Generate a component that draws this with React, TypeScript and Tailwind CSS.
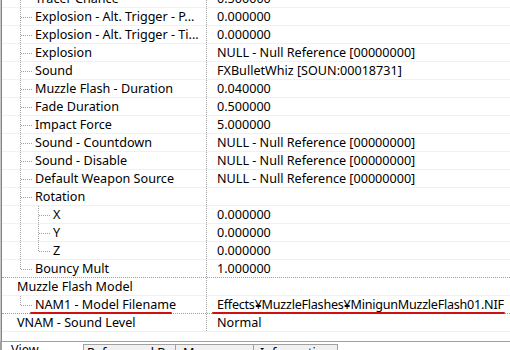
const rows = [
  { label: "Tracer Chance", value: "0.500000", level: 1 },
  { label: "Explosion - Alt. Trigger - P...", value: "0.000000", level: 1 },
  { label: "Explosion - Alt. Trigger - Ti...", value: "0.000000", level: 1 },
  { label: "Explosion", value: "NULL - Null Reference [00000000]", level: 1 },
  { label: "Sound", value: "FXBulletWhiz [SOUN:00018731]", level: 1 },
  { label: "Muzzle Flash - Duration", value: "0.040000", level: 1 },
  { label: "Fade Duration", value: "0.500000", level: 1 },
  { label: "Impact Force", value: "5.000000", level: 1 },
  { label: "Sound - Countdown", value: "NULL - Null Reference [00000000]", level: 1 },
  { label: "Sound - Disable", value: "NULL - Null Reference [00000000]", level: 1 },
  { label: "Default Weapon Source", value: "NULL - Null Reference [00000000]", level: 1 },
  { label: "Rotation", value: "", level: 1 },
  { label: "X", value: "0.000000", level: 2 },
  { label: "Y", value: "0.000000", level: 2 },
  { label: "Z", value: "0.000000", level: 2, last: true },
  { label: "Bouncy Mult", value: "1.000000", level: 1, last: true, dotted: true },
  { label: "Muzzle Flash Model", value: "", level: 0 },
  { label: "NAM1 - Model Filename", value: "Effects¥MuzzleFlashes¥MinigunMuzzleFlash01.NIF", level: 1, last: true, dotted: true, marked: true },
  { label: "VNAM - Sound Level", value: "Normal", level: 0 },
];

type Row = (typeof rows)[number] & { last?: boolean; dotted?: boolean; marked?: boolean };

const TreeLines = ({ row }: { row: Row }) => {
  if (row.level === 0) return null;
  if (row.level === 1) {
    return (
      <>
        <div className={`absolute left-[18px] top-0 border-l border-dotted border-[#a0a0a0] ${row.last ? "h-[9px]" : "h-full"}`} />
        <div className="absolute left-[19px] top-[9px] w-[11px] border-t border-dotted border-[#a0a0a0]" />
      </>
    );
  }
  return (
    <>
      <div className="absolute left-[18px] top-0 h-full border-l border-dotted border-[#a0a0a0]" />
      <div className={`absolute left-[36px] top-0 border-l border-dotted border-[#a0a0a0] ${row.last ? "h-[9px]" : "h-full"}`} />
      <div className="absolute left-[37px] top-[9px] w-[11px] border-t border-dotted border-[#a0a0a0]" />
    </>
  );
};

const App = () => {
  return (
    <div className="w-[510px] h-[350px] overflow-hidden bg-white flex flex-col text-[12.6px] text-black font-['Noto_Sans','Noto_Sans_CJK_JP',sans-serif]">
      <div className="flex h-[341px] shrink-0 overflow-hidden">
        <div className="w-[1px] bg-[#c8c8c8]" />
        <div className="w-[1px] bg-[#828282]" />
        <div className="flex-1 flex flex-col mt-[-10px]">
          {rows.map((r: Row, i) => (
            <div
              key={i}
              className={`relative flex h-[18px] shrink-0 leading-[18px] ${r.dotted ? "border-b border-dotted border-[#a0a0a0]" : "border-b border-[#f0f0f0]"}`}
            >
              <div className="relative w-[205px] shrink-0 border-r border-dotted border-[#a0a0a0] whitespace-nowrap overflow-hidden">
                <TreeLines row={r} />
                <span className={r.level === 0 ? "ml-[15px]" : r.level === 1 ? "ml-[33px]" : "ml-[51px]"}>{r.label}</span>
              </div>
              <div className={`pl-[10px] whitespace-nowrap ${r.marked ? "tracking-[-0.25px]" : ""}`}>{r.value}</div>
              {r.marked && (
                <>
                  <div className="absolute left-[28px] top-[16px] w-[142px] h-[2px] bg-[#d01010] rounded-full" />
                  <div className="absolute left-[210px] top-[16px] w-[293px] h-[2px] bg-[#d01010] rounded-full" />
                </>
              )}
            </div>
          ))}
        </div>
      </div>
      <div className="flex h-[9px] border-t border-[#a0a0a0] bg-white leading-[15px] whitespace-nowrap">
        <div className="w-[83px] shrink-0 pl-[9px] border-l-2 border-[#a0a0a0]">View</div>
        <div className="w-[93px] shrink-0 mt-[2px] border-x border-t border-[#a0a0a0] bg-[#f0f0f0] pl-[3px]">Referenced By</div>
        <div className="w-[78px] shrink-0 mt-[2px] border-r border-t border-[#a0a0a0] bg-[#f0f0f0] pl-[7px]">Messages</div>
        <div className="w-[84px] shrink-0 mt-[2px] border-r border-t border-[#a0a0a0] bg-[#f0f0f0] pl-[6px]">Information</div>
      </div>
    </div>
  );
};

export default App;
